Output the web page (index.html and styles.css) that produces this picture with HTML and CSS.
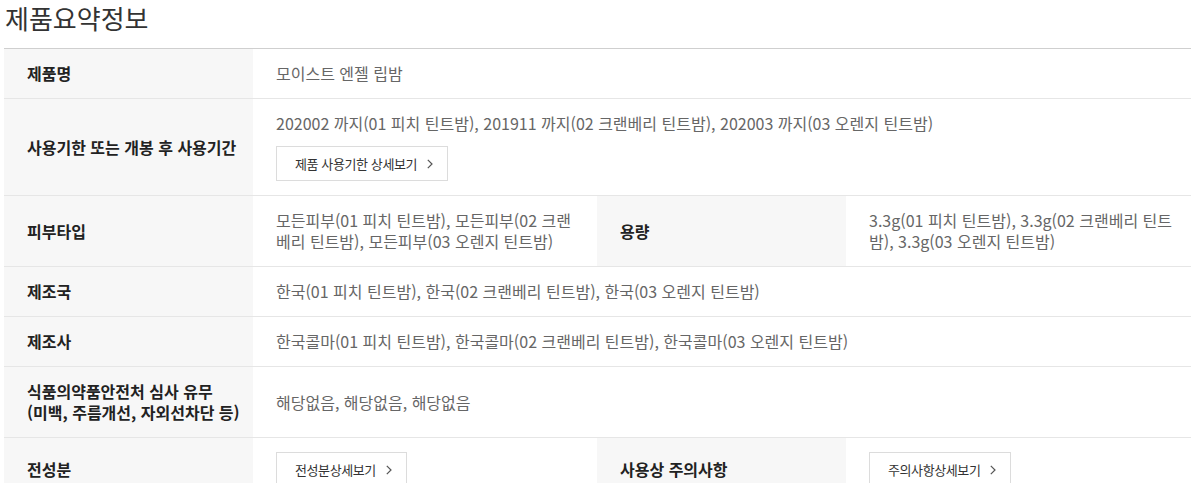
FILE: index.html
```html
<!DOCTYPE html>
<html lang="ko">
<head>
<meta charset="utf-8">
<title>제품요약정보</title>
<link rel="stylesheet" href="styles.css">
</head>
<body>
<section class="summary">
  <h2 class="summary-title">제품요약정보</h2>
  <table class="info">
    <colgroup>
      <col class="c-label"><col class="c-value"><col class="c-label"><col class="c-value2">
    </colgroup>
    <tbody>
      <tr>
        <th>제품명</th>
        <td colspan="3">모이스트 엔젤 립밤</td>
      </tr>
      <tr>
        <th>사용기한 또는 개봉 후 사용기간</th>
        <td colspan="3">
          <div>202002 까지(01 피치 틴트밤), 201911 까지(02 크랜베리 틴트밤), 202003 까지(03 오렌지 틴트밤)</div>
          <a class="btn btn-top" href="#">제품 사용기한 상세보기<svg class="chev" width="6" height="10" viewBox="0 0 6 10"><polyline points="0.8,0.8 5,5 0.8,9.2" fill="none" stroke="#555" stroke-width="1.2"/></svg></a>
        </td>
      </tr>
      <tr>
        <th>피부타입</th>
        <td>모든피부(01 피치 틴트밤), 모든피부(02 크랜베리 틴트밤), 모든피부(03 오렌지 틴트밤)</td>
        <th>용량</th>
        <td>3.3g(01 피치 틴트밤), 3.3g(02 크랜베리 틴트밤), 3.3g(03 오렌지 틴트밤)</td>
      </tr>
      <tr>
        <th>제조국</th>
        <td colspan="3">한국(01 피치 틴트밤), 한국(02 크랜베리 틴트밤), 한국(03 오렌지 틴트밤)</td>
      </tr>
      <tr>
        <th>제조사</th>
        <td colspan="3">한국콜마(01 피치 틴트밤), 한국콜마(02 크랜베리 틴트밤), 한국콜마(03 오렌지 틴트밤)</td>
      </tr>
      <tr>
        <th>식품의약품안전처 심사 유무<br>(미백, 주름개선, 자외선차단 등)</th>
        <td colspan="3">해당없음, 해당없음, 해당없음</td>
      </tr>
      <tr>
        <th>전성분</th>
        <td><a class="btn" href="#">전성분상세보기<svg class="chev" width="6" height="10" viewBox="0 0 6 10"><polyline points="0.8,0.8 5,5 0.8,9.2" fill="none" stroke="#555" stroke-width="1.2"/></svg></a></td>
        <th>사용상 주의사항</th>
        <td><a class="btn" href="#">주의사항상세보기<svg class="chev" width="6" height="10" viewBox="0 0 6 10"><polyline points="0.8,0.8 5,5 0.8,9.2" fill="none" stroke="#555" stroke-width="1.2"/></svg></a></td>
      </tr>
    </tbody>
  </table>
</section>
</body>
</html>
```
FILE: styles.css
```css
html, body {
  margin: 0;
  padding: 0;
  background: #fff;
}
body {
  font-family: "Noto Sans CJK KR", "Noto Sans", sans-serif;
  color: #666;
}
.summary {
  padding: 0 0 0 4px;
}
.summary-title {
  margin: 0;
  padding: 0 0 0 1px;
  height: 48px;
  font-size: 26px;
  line-height: 36px;
  font-weight: 400;
  color: #333;
  letter-spacing: 0;
}
.info {
  width: 1187px;
  table-layout: fixed;
  border-collapse: collapse;
  border-top: 1px solid #cfcfcf;
}
.c-label { width: 249px; }
.c-value { width: 344px; }
.c-value2 { width: 345px; }
.info th,
.info td {
  border-bottom: 1px solid #e6e6e6;
  padding: 14px 14px 14px 23px;
  font-size: 16px;
  line-height: 21px;
  vertical-align: middle;
  text-align: left;
}
.info th {
  background: #f7f7f7;
  color: #222;
  font-weight: 700;
  padding-right: 4px;
}
.info td {
  color: #666;
  font-weight: 400;
}
.btn {
  display: inline-flex;
  align-items: center;
  gap: 10px;
  height: 33px;
  padding: 0 14px 0 18px;
  border: 1px solid #dcdcdc;
  background: #fff;
  color: #333;
  font-size: 13px;
  line-height: 21px;
  letter-spacing: -0.4px;
  text-decoration: none;
  vertical-align: middle;
}
.btn-top {
  margin-top: 12px;
}
.chev {
  display: block;
}
```
